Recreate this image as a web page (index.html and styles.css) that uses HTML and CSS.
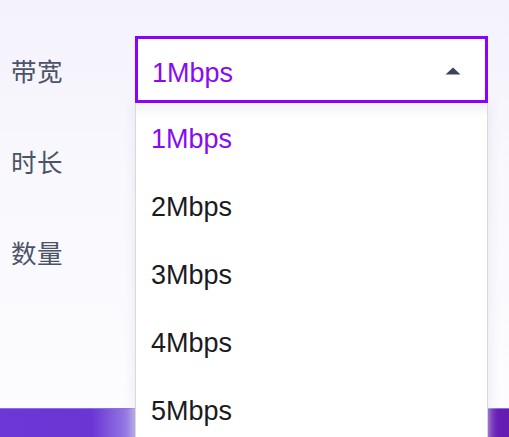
FILE: index.html
```html
<!DOCTYPE html>
<html lang="zh">
<head>
<meta charset="utf-8">
<link rel="stylesheet" href="styles.css">
</head>
<body>
<div class="page">
  <div class="form">
    <div class="label">带宽</div>
    <div class="field">
      <div class="select">
        <span class="value">1Mbps</span>
        <svg class="arrow" width="16" height="8" viewBox="0 0 16 8"><path d="M8 0.5 L15.5 7.5 L0.5 7.5 Z" fill="#3d4459"/></svg>
      </div>
      <ul class="dropdown">
        <li class="option selected">1Mbps</li>
        <li class="option">2Mbps</li>
        <li class="option">3Mbps</li>
        <li class="option">4Mbps</li>
        <li class="option">5Mbps</li>
      </ul>
    </div>
    <div class="label">时长</div>
    <div class="field"></div>
    <div class="label">数量</div>
    <div class="field"></div>
  </div>
  <div class="bar"></div>
</div>
</body>
</html>
```

FILE: styles.css
```css
html, body {
  margin: 0;
  padding: 0;
}
body {
  width: 509px;
  height: 437px;
  overflow: hidden;
  font-family: "Liberation Sans", Arial, "Noto Sans CJK SC", sans-serif;
}
.page {
  height: 437px;
  background: linear-gradient(180deg, #f4f2fc 0%, #f8f8fd 40%, #fdfdff 100%);
  overflow: hidden;
}
.form {
  display: grid;
  grid-template-columns: 135px 353px;
  grid-auto-rows: 67px;
  row-gap: 24px;
  padding-top: 36px;
}
.label {
  display: flex;
  align-items: center;
  padding-left: 11px;
  padding-bottom: 1px;
  font-family: "Noto Sans CJK SC", sans-serif;
  font-size: 25.5px;
  color: #4b5366;
  letter-spacing: 0.5px;
}
.field {
  position: relative;
}
.select {
  box-sizing: border-box;
  height: 67px;
  border: 3px solid #8b00ff;
  background: #ffffff;
  display: flex;
  align-items: center;
  justify-content: space-between;
  padding: 8px 24px 0 14px;
  position: relative;
  z-index: 3;
}
.value {
  font-size: 27px;
  color: #8a0bf0;
}
.arrow {
  display: block;
  margin-top: -5px;
}
.dropdown {
  position: absolute;
  top: 67px;
  left: 0;
  width: 353px;
  box-sizing: border-box;
  margin: 0;
  padding: 2px 0 0;
  list-style: none;
  background: linear-gradient(180deg, #f1f1f6 0px, #ffffff 14px);
  border-left: 1.5px solid #d9dae0;
  border-right: 1.5px solid #d9dae0;
  box-shadow: 0 0 10px rgba(225, 226, 238, 0.9);
  height: 400px;
  z-index: 2;
}
.option {
  height: 68px;
  display: flex;
  align-items: center;
  padding-left: 15px;
  font-size: 27px;
  color: #1b1b1f;
}
.option.selected {
  color: #8a0bf0;
}
.bar {
  margin-top: 123px;
  height: 40px;
  background: linear-gradient(90deg, #6c37d6 0%, #6b35d4 18%, #9c84e4 26%, #6a2cc4 30%, #651cb3 100%);
  border-top: 1px solid #8c6ee6;
}
```
